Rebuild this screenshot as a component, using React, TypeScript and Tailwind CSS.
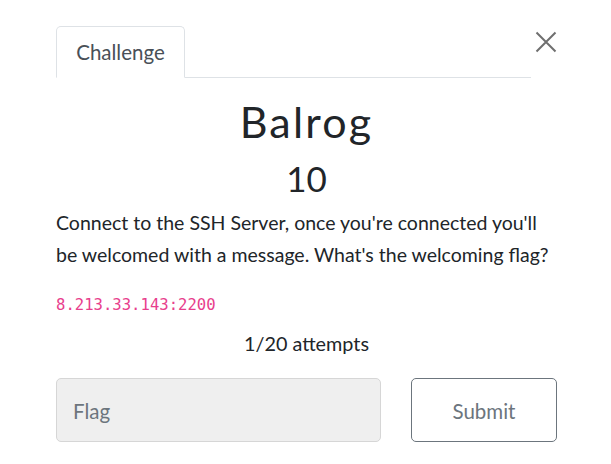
export default function App() {
  return (
    <div className="w-[611px] h-[464px] bg-white font-['Lato','Liberation_Sans',sans-serif] text-[#212529] pl-[56px] pr-[54px] pt-[26px]">
      <div className="flex items-start">
        <nav className="flex-1 flex border-b border-[#dee2e6]">
          <div className="-mb-px h-[52px] w-[129px] flex items-center justify-center border border-[#dee2e6] border-b-white bg-white rounded-t-[5px] text-[20.5px] text-[#495057]">
            Challenge
          </div>
        </nav>
        <button className="ml-[3px] mt-[4px] w-[23px] h-[23px] flex items-center justify-center">
          <svg width="22" height="22" viewBox="0 0 22 22" fill="none" stroke="#6f6f6f" strokeWidth="2">
            <path d="M1.5 1.5 L20.5 20.5 M20.5 1.5 L1.5 20.5" />
          </svg>
        </button>
      </div>
      <h1 className="mt-[20px] text-center text-[43px] leading-[48px] tracking-[2.2px] font-normal">Balrog</h1>
      <div className="mt-[13px] text-center text-[35px] leading-[38px]">10</div>
      <p className="mt-[10px] text-[19.5px] leading-[32px]">
        Connect to the SSH Server, once you're connected you'll be welcomed with a message. What's the welcoming flag?
      </p>
      <div className="mt-[23px] font-['DejaVu_Sans_Mono',monospace] text-[15.6px] leading-[22px] text-[#e83e8c]">8.213.33.143:2200</div>
      <div className="mt-[15px] text-center text-[19.8px] leading-[24px]">1/20 attempts</div>
      <div className="mt-[23px] flex">
        <div className="w-[325px] h-[64px] rounded-[5px] border border-[#d6d6d6] bg-[#efefef] flex items-center pl-[16px] pt-[2px] text-[20.5px] text-[#6c757d]">
          Flag
        </div>
        <button className="ml-[30px] w-[146px] h-[64px] rounded-[5px] border border-[#6c757d] bg-white pt-[2px] text-[20.5px] text-[#6c757d]">
          Submit
        </button>
      </div>
    </div>
  );
}
